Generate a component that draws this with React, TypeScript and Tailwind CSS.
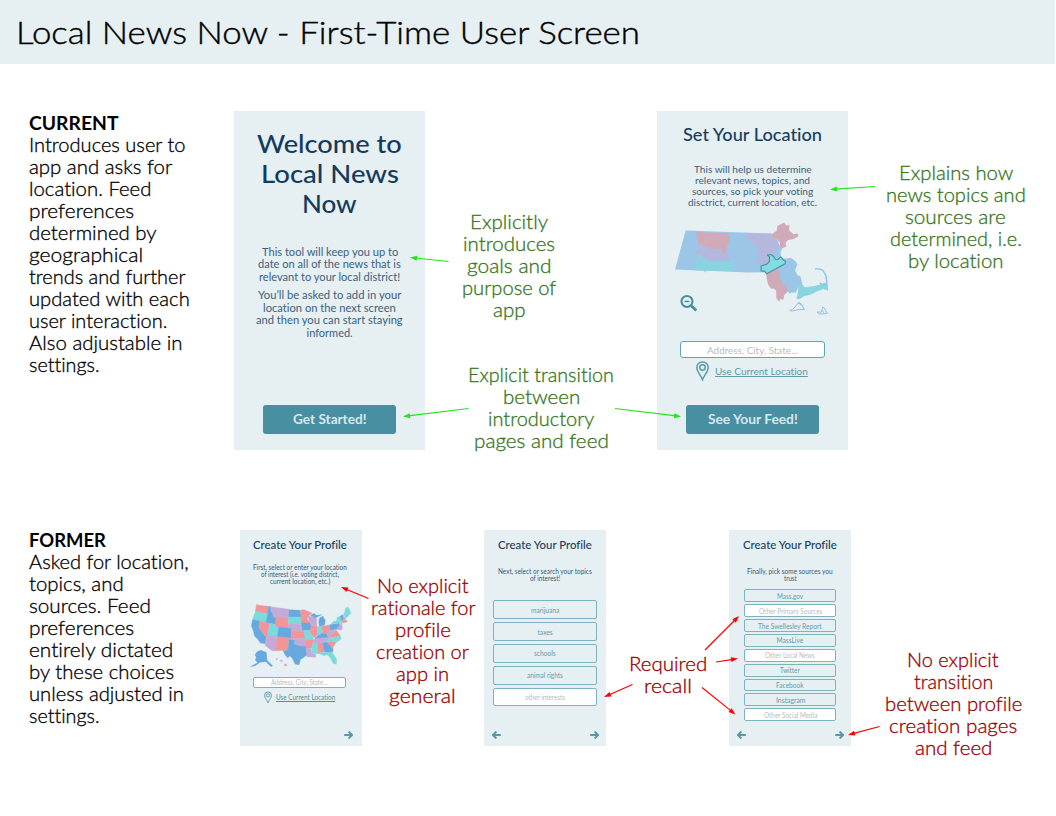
import { useLayoutEffect, useRef, useState } from "react";
import type { ReactNode } from "react";

type Row = [text: string, width: number];

/* One line of copy, stretched horizontally to a given measure. */
function Line({ text, width, underline = false }: { text: string; width: number; underline?: boolean }) {
  const ref = useRef<HTMLSpanElement>(null);
  const [scale, setScale] = useState(1);
  useLayoutEffect(() => {
    const fit = () => {
      if (ref.current) setScale(width / ref.current.offsetWidth);
    };
    fit();
    document.fonts.ready.then(fit);
  }, [text, width]);
  return (
    <span className="block text-left whitespace-nowrap" style={{ width }}>
      <span
        ref={ref}
        className={`inline-block origin-left align-top ${underline ? "underline" : ""}`}
        style={{ transform: `scaleX(${scale})` }}
      >
        {text}
      </span>
    </span>
  );
}

function Lines({ rows, className = "" }: { rows: Row[]; className?: string }) {
  return (
    <div className={`flex flex-col ${className}`}>
      {rows.map(([text, width], i) => (
        <Line key={i} text={text} width={width} />
      ))}
    </div>
  );
}

function Note({ rows, className = "" }: { rows: Row[]; className?: string }) {
  return <Lines rows={rows} className={`items-center text-[18.67px] leading-[22px] font-light [-webkit-text-stroke:0.3px] ${className}`} />;
}

function Summary({ title, rows }: { title: Row; rows: Row[] }) {
  return (
    <div className="text-[18.67px] leading-[22px] text-black">
      <h2 className="font-bold">
        <Line text={title[0]} width={title[1]} />
      </h2>
      <Lines rows={rows} className="font-light [-webkit-text-stroke:0.3px]" />
    </div>
  );
}

function BigButton({ text, width }: { text: string; width: number }) {
  return (
    <button className="flex h-[29px] w-[133px] items-center justify-center rounded-[3px] bg-[#488fa1] text-[12.7px] leading-[15px] font-bold text-[#d8e8ed]">
      <Line text={text} width={width} />
    </button>
  );
}

function Pin({ className }: { className: string }) {
  return (
    <svg viewBox="0 0 13 20" className={className} fill="none" stroke="#5b9bab">
      <path d="M6.500 18.800C5.500 15 .8 11 .8 6.600a5.700 5.700 0 0 1 11.400 0c0 4.400-4.700 8.400-5.700 12.200Z" strokeWidth="1.500" />
      <circle cx="6.500" cy="6.500" r="2.700" strokeWidth="1.500" />
    </svg>
  );
}

function Arrow({ left = false }: { left?: boolean }) {
  return (
    <svg viewBox="0 0 9 8" className={left ? "h-2 w-[9px] rotate-180" : "h-2 w-[9px]"} fill="none" stroke="#5699a8">
      <path d="M.2 4H8M4.600.5 8.100 4 4.600 7.500" strokeWidth="1.900" />
    </svg>
  );
}

function MassMap() {
  return (
    <svg viewBox="70 20 475 290" className="h-[97px] w-[158px]">
      <path fill="#9bc6e8" d="M108 51 365 60 372 70 388 95 398 103 393 119 396 132 408 136 424 133 438 143 444 153 440 161 437 170 444 185 453 188 459 211 445 224 439 238 428 237 419 240 412 225 400 218 385 200 380 182 354 182 345 176 297 177 170 172 167 178 163 172 76 168Z" />
      <path fill="#d0aab8" d="M140 55 236 59 240 69 239 90 234 93 229 124 217 119 216 105 182 108 175 101 154 93 147 91Z" />
      <path fill="#b5b8de" d="M147 91 154 93 175 101 182 108 216 105 217 119 229 124 240 120 241 140 229 145 223 138 210 144 195 141 176 146 164 139 155 136 150 121 145 124 136 120Z" />
      <path fill="#b5b8de" d="M287 60 365 60 363 72 383 78 390 95 383 112 365 122 358 126 360 145 336 155 321 148 328 125 320 115 326 98 309 94 305 80 290 70Z" />
      <path fill="#d0aab8" d="M362 66 383 50 383 38 404 27 410 36 420 34 419 50 432 62 445 60 447 68 433 76 416 79 408 88 411 98 397 105 390 96 392 88 382 77 365 72Z" />
      <path fill="#88d4e0" d="M145 124 151 119 156 132 171 137 183 145 203 140 216 145 230 140 235 146 247 141 247 160 254 163 253 173 134 170 138 150 147 141Z" />
      <path fill="#d0aab8" d="M350 181 370 173 384 164 392 176 390 192 397 202 399 213 412 217 417 233 405 244 402 259 393 257 389 265 381 255 380 232 372 224 366 227 356 214 352 195Z" />
      <path fill="#88d4e0" d="M448 212 459 213 466 221 491 218 513 213 528 208 536 212 536 232 522 227 502 234 485 243 465 248 448 258 441 255 445 240Z" />
      <path
        fill="#84dce0"
        stroke="#4795a2"
        strokeWidth="3.500"
        strokeLinejoin="round"
        d="M335 157 352 152 360 144 360 130 354 125 364 123 373 129 378 138 385 138 394 130 400 138 408 143 407 151 352 181 345 173 335 172Z"
      />
      <g fill="none" stroke="#91bfe6" strokeLinejoin="round">
        <path strokeWidth="4" d="m497 166 13 0 11 5 9 16 3 22-14 5-8-6" />
        <path strokeWidth="3" d="m421 291 9-3 16-18 9 0 10 18-20 1-16 4Zm23-21 6-3 4 9" />
        <path strokeWidth="3" d="m503 296 13 0 4-15 4 2 10 17-25 2Zm16-6 4 8" />
      </g>
      <g stroke="#438f9e" fill="none">
        <circle cx="112" cy="264" r="16.500" strokeWidth="6" />
        <path strokeWidth="4.500" d="M105 264h14" />
        <path strokeWidth="8" d="m124 276 16 15" />
      </g>
    </svg>
  );
}

const BLUE = "#67a9df";
const PINK = "#f29599";
const TEAL = "#7adbdc";
const LILAC = "#c3aad9";

const STATES: [string, string][] = [
  [PINK, "40,42 46,45 76,48 73,71 50,67 36,62"],
  [TEAL, "37,61 50,67 73,70 71,82 68,97 28,87"],
  [BLUE, "76,48 82,49 83,62 90,72 91,80 99,82 97,103 67,97 71,82"],
  [BLUE, "28,87 50,93 47,112 69,141 66,160 51,158 44,147 34,138 30,122 24,106"],
  [PINK, "50,93 79,99 74,132 70,141 47,112"],
  [LILAC, "82,49 137,57 136,84 99,82 91,80 90,72 83,62"],
  [PINK, "99,81 136,84 134,114 95,109"],
  [TEAL, "79,99 97,102 96,109 106,110 103,139 73,134"],
  [BLUE, "106,110 145,114 143,144 102,140"],
  [LILAC, "73,134 103,139 98,181 86,181 65,165 70,141"],
  [PINK, "102,139 137,143 134,179 97,181"],
  [BLUE, "137,58 171,60 174,80 136,80"],
  [TEAL, "136,80 174,81 175,104 164,101 135,101"],
  [LILAC, "135,101 164,101 176,105 182,123 145,122 145,114 134,113"],
  [PINK, "145,122 183,123 187,144 143,144"],
  [LILAC, "137,144 187,144 188,168 175,167 155,161 153,148 137,147"],
  [BLUE, "137,147 153,149 154,162 175,168 188,168 191,194 171,208 167,224 155,221 147,204 140,197 133,202 127,196 119,181 134,180"],
  [PINK, "172,59 183,58 206,68 194,78 192,87 200,98 174,98"],
  [BLUE, "174,98 200,98 206,111 198,121 178,120"],
  [TEAL, "180,120 198,119 208,137 212,148 187,149"],
  [PINK, "187,149 212,148 205,174 188,174"],
  [LILAC, "188,173 204,175 205,189 217,190 217,201 191,199"],
  [LILAC, "194,77 212,79 220,86 220,106 204,106 197,92"],
  [PINK, "203,106 221,107 223,130 216,144 209,138 200,124"],
  [TEAL, "222,109 236,108 238,131 222,139"],
  [BLUE, "201,75 212,69 219,75 235,73 223,79 218,83"],
  [BLUE, "229,82 239,78 246,91 243,105 228,108 226,95"],
  [PINK, "236,108 258,104 261,119 251,132 238,127"],
  [BLUE, "214,145 223,137 238,128 251,132 256,142"],
  [LILAC, "211,149 220,144 263,141 249,155 210,160"],
  [TEAL, "207,160 221,158 222,190 206,188"],
  [PINK, "222,158 238,157 244,185 223,189"],
  [BLUE, "238,157 252,155 270,177 266,188 244,186"],
  [TEAL, "223,188 266,185 280,207 279,222 270,220 260,201 251,193 242,196"],
  [PINK, "251,155 264,152 278,156 268,174"],
  [TEAL, "248,154 262,142 291,136 293,146 280,156 266,152"],
  [PINK, "254,142 267,130 278,118 291,136 266,141"],
  [LILAC, "251,131 260,118 275,118 264,137 254,141"],
  [BLUE, "259,103 287,98 292,108 289,116 261,119"],
  [TEAL, "263,101 270,93 279,92 282,81 292,77 297,102 287,98"],
  [BLUE, "291,77 300,73 301,89 295,91"],
  [LILAC, "300,73 307,87 301,89"],
  [TEAL, "302,72 307,53 315,51 323,68 307,85"],
  [PINK, "294,91 306,88 313,94 299,98"],
  [LILAC, "289,101 296,103 297,116 291,120 281,116"],
  [BLUE, "40,185 52,180 69,186 71,210 88,226 83,229 68,214 50,216 36,226 22,229 43,217 36,209 39,201 35,194"],
  [LILAC, "98,205 102,205 102,208 98,208"],
  [LILAC, "110,209 116,210 118,213 111,213"],
  [LILAC, "125,220 132,224 126,228 122,224"],
];

function UnitedStatesMap() {
  return (
    <svg viewBox="20 35 309 201" className="h-[67px] w-[103px]">
      {STATES.map(([fill, points], i) => (
        <polygon key={i} fill={fill} stroke={fill} strokeWidth="1" points={points} />
      ))}
    </svg>
  );
}

function ProfileScreen({
  intro,
  introTop,
  width = "w-[122px]",
  back = true,
  children,
}: {
  intro: Row[];
  introTop: string;
  width?: string;
  back?: boolean;
  children: ReactNode;
}) {
  return (
    <div className={`flex h-[216px] shrink-0 flex-col items-center bg-[#e6eff2] pt-[8px] ${width}`}>
      <h3 className="text-[11.5px] leading-[14px] font-medium text-[#173e5d]">
        <Line text="Create Your Profile" width={94} />
      </h3>
      <Lines rows={intro} className={`items-center text-[6.6px] leading-[7.2px] text-[#345a75] ${introTop}`} />
      {children}
      <div className="mt-auto mb-[7px] flex w-[107px] justify-between">
        {back ? <Arrow left /> : <span />}
        <Arrow />
      </div>
    </div>
  );
}

function Choice({ row, blank, className }: { row: Row; blank: boolean; className: string }) {
  return (
    <div
      className={`flex items-center justify-center rounded-[2px] border border-[#7db3c1] text-[6.6px] leading-[8px] ${className} ${
        blank ? "bg-white text-[#b7bcbe]" : "text-[#5d9dad]"
      }`}
    >
      <Line text={row[0]} width={row[1]} />
    </div>
  );
}

const TOPICS: Row[] = [["marijuana", 28], ["taxes", 15], ["schools", 22], ["animal rights", 36], ["other interests", 40]];
const SOURCES: Row[] = [
  ["Mass.gov", 26],
  ["Other Primary Sources", 63],
  ["The Swellesley Report", 64],
  ["MassLive", 27],
  ["Other Local News", 50],
  ["Twitter", 20],
  ["Facebook", 28],
  ["Instagram", 29],
  ["Other Social Media", 53],
];

const POINTERS: { color: string; from: [number, number]; to: [number, number] }[] = [
  { color: "#22e619", from: [448.5, 261.5], to: [410, 257.5] },
  { color: "#22e619", from: [468.500, 408.500], to: [403, 416.500] },
  { color: "#22e619", from: [615, 408.500], to: [681, 416.500] },
  { color: "#22e619", from: [875, 186.500], to: [830, 189.500] },
  { color: "#ff0000", from: [368.500, 598.500], to: [341, 587] },
  { color: "#ff0000", from: [632.500, 684.500], to: [604, 697] },
  { color: "#ff0000", from: [705, 650], to: [739, 616] },
  { color: "#ff0000", from: [716, 662], to: [738, 658.500] },
  { color: "#ff0000", from: [702, 687.500], to: [735.500, 714.500] },
  { color: "#ff0000", from: [879.500, 726.500], to: [848, 735] },
];

function Pointers() {
  return (
    <svg viewBox="0 0 1056 816" className="pointer-events-none absolute inset-0 h-[816px] w-[1056px]">
      {POINTERS.map(({ color, from, to }, i) => {
        const angle = (Math.atan2(to[1] - from[1], to[0] - from[0]) * 180) / Math.PI;
        const length = Math.hypot(to[0] - from[0], to[1] - from[1]);
        return (
          <g key={i} transform={`translate(${to[0]} ${to[1]}) rotate(${angle})`}>
            <path d={`M${-length} 0H-5`} stroke={color} strokeWidth="1.200" />
            <path d="M0 0-7-2.500V2.500Z" fill={color} />
          </g>
        );
      })}
    </svg>
  );
}

export default function App() {
  return (
    <main className="relative h-[816px] w-[1056px] overflow-hidden bg-white font-['Lato',sans-serif] [font-variant-ligatures:none]">
      <header className="h-16 w-[1055px] bg-[#e6eff2] pt-[12px] pl-4">
        <h1 className="text-[32px] leading-10 font-light text-black [-webkit-text-stroke:0.4px]">
          <Line text="Local News Now - First-Time User Screen" width={624} />
        </h1>
      </header>

      <section className="mt-[46.6px] flex h-[419.4px] items-start pl-[29px]">
        <div className="w-[205px] pt-[1.4px]">
          <Summary
            title={["CURRENT", 89]}
            rows={[
              ["Introduces user to", 157],
              ["app and asks for", 143],
              ["location. Feed", 122],
              ["preferences", 105],
              ["determined by", 128],
              ["geographical", 114],
              ["trends and further", 157],
              ["updated with each", 161],
              ["user interaction.", 138],
              ["Also adjustable in", 153],
              ["settings.", 71],
            ]}
          />
        </div>

        <div className="flex h-[339px] w-[191px] shrink-0 flex-col items-center bg-[#e6eff2] pt-[17px]">
          <Lines rows={[["Welcome to", 145], ["Local News", 138], ["Now", 55]]} className="items-center text-[25.5px] leading-[30px] font-medium text-[#143b5b]" />
          <Lines
            rows={[["This tool will keep you up to", 136], ["date on all of the news that is", 143], ["relevant to your local district!", 141]]}
            className="mt-[28px] items-center text-[11px] leading-[12.5px] text-[#3d617b]"
          />
          <Lines
            rows={[["You’ll be asked to add in your", 143], ["location on the next screen", 133], ["and then you can start staying", 147], ["informed.", 46]]}
            className="mt-[6px] mb-auto items-center text-[11px] leading-[12.5px] text-[#3d617b]"
          />
          <div className="mb-[16px]">
            <BigButton text="Get Started!" width={73} />
          </div>
        </div>

        <div className="flex w-[232px] shrink-0 flex-col pt-[100.4px]">
          <Note
            rows={[["Explicitly", 78], ["introduces", 92], ["goals and", 85], ["purpose of", 94], ["app", 33]]}
            className="ml-[34px] w-[100px] text-[#38761d]"
          />
          <Note
            rows={[["Explicit transition", 146], ["between", 77], ["introductory", 106], ["pages and feed", 135]]}
            className="mt-[43px] ml-[41px] w-[150px] text-[#38761d]"
          />
        </div>

        <div className="flex h-[339px] w-[191px] shrink-0 flex-col items-center bg-[#e6eff2] pt-[14px]">
          <h3 className="text-[17px] leading-5 font-medium text-[#173e5d]">
            <Line text="Set Your Location" width={139} />
          </h3>
          <Lines
            rows={[["This will help us determine", 118], ["relevant news, topics, and", 115], ["sources, so pick your voting", 121], ["disctrict, current location, etc.", 129]]}
            className="mt-[19px] items-center text-[10px] leading-[11.2px] text-[#3d617b]"
          />
          <div className="mt-[12px] -ml-px">
            <MassMap />
          </div>
          <div className="mt-[24px] flex h-[17px] w-[145px] items-center justify-center rounded-[3px] border border-[#66a3b2] bg-white text-[10px] leading-3 text-[#b7bcbe]">
            <Line text="Address, City, State..." width={91} />
          </div>
          <div className="mt-[3px] -ml-px flex h-5 items-start gap-[6px]">
            <Pin className="h-5 w-[13px]" />
            <div className="pt-[3.5px] text-[10px] leading-3 text-[#5b9bab]">
              <Line text="Use Current Location" width={93} underline />
            </div>
          </div>
          <div className="mt-auto mb-[16px]">
            <BigButton text="See Your Feed!" width={90} />
          </div>
        </div>

        <div className="ml-[32px] pt-[51.4px]">
          <Note
            rows={[["Explains how", 114], ["news topics and", 140], ["sources are", 101], ["determined, i.e.", 132], ["by location", 96]]}
            className="w-[151px] text-[#38761d]"
          />
        </div>
      </section>

      <section className="flex items-start pl-[29px]">
        <div className="-mt-px w-[211px] shrink-0">
          <Summary
            title={["FORMER", 77]}
            rows={[
              ["Asked for location,", 160],
              ["topics, and", 95],
              ["sources. Feed", 122],
              ["preferences", 105],
              ["entirely dictated", 144],
              ["by these choices", 145],
              ["unless adjusted in", 155],
              ["settings.", 71],
            ]}
          />
        </div>

        <ProfileScreen
          back={false}
          width="w-[121.5px] pr-[2px]"
          introTop="mt-[12px]"
          intro={[["First, select or enter your location", 94], ["of interest (i.e. voting district,", 78], ["current location, etc.)", 60]]}
        >
          <div className="mt-[16px] ml-[3px]">
            <UnitedStatesMap />
          </div>
          <div className="mt-[8px] flex h-[11px] w-[93px] items-center justify-center rounded-[2px] border border-[#7db3c1] bg-white text-[6.6px] leading-[8px] text-[#b7bcbe]">
            <Line text="Address, City, State..." width={57} />
          </div>
          <div className="mt-[3px] flex items-start gap-[4px]">
            <Pin className="h-[13px] w-[8px]" />
            <div className="pt-[2px] text-[6.6px] leading-[8px] text-[#4b8f9f]">
              <Line text="Use Current Location" width={59} underline />
            </div>
          </div>
        </ProfileScreen>

        <Note
          rows={[["No explicit", 92], ["rationale for", 104], ["profile", 56], ["creation or", 93], ["app in", 53], ["general", 67]]}
          className="mt-[45px] w-[122.5px] shrink-0 text-[#990000]"
        />

        <ProfileScreen introTop="mt-[16px]" intro={[["Next, select or search your topics", 94], ["of interest!", 30]]}>
          <div className="mt-[18px] flex flex-col gap-[2.9px]">
            {TOPICS.map((row, i) => (
              <Choice key={row[0]} row={row} blank={i === 4} className="h-[18.9px] w-[104px]" />
            ))}
          </div>
        </ProfileScreen>

        <Note rows={[["Required", 78], ["recall", 48]]} className="mt-[123px] w-[123px] shrink-0 text-[#990000]" />

        <ProfileScreen introTop="mt-[16px]" intro={[["Finally, pick some sources you", 86], ["trust", 13]]}>
          <div className="mt-[7px] flex flex-col gap-[2px]">
            {SOURCES.map((row) => (
              <Choice key={row[0]} row={row} blank={row[0].startsWith("Other")} className="h-[12.86px] w-[92px]" />
            ))}
          </div>
        </ProfileScreen>

        <Note
          rows={[["No explicit", 92], ["transition", 79], ["between profile", 137], ["creation pages", 128], ["and feed", 77]]}
          className="mt-[119px] ml-[27px] w-[150px] shrink-0 text-[#990000]"
        />
      </section>

      <Pointers />
    </main>
  );
}
